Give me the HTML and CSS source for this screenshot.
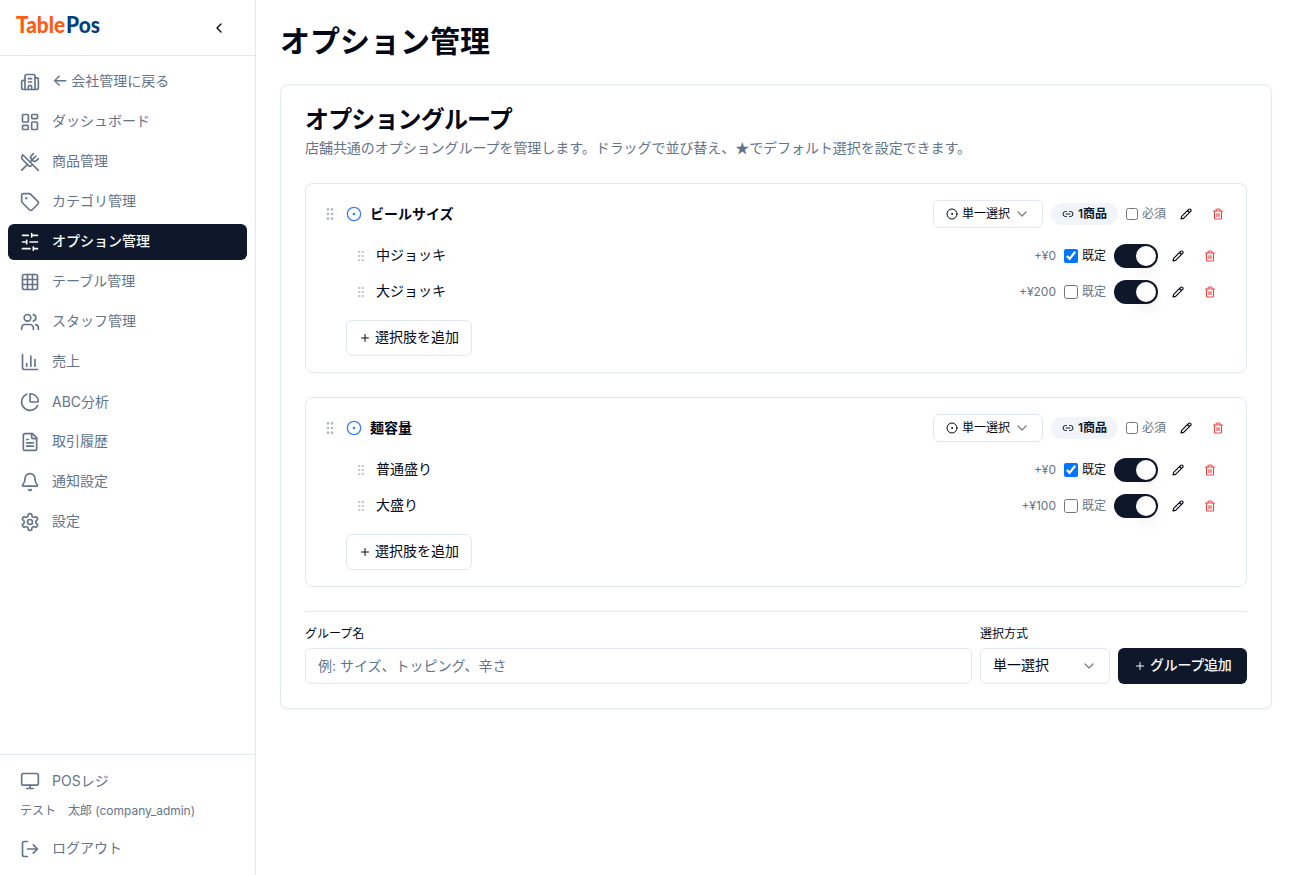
FILE: index.html
```html
<!DOCTYPE html>
<html lang="ja">
<head>
    <meta charset="UTF-8">
    <meta name="viewport" content="width=device-width, initial-scale=1.0">
    <title>オプション管理 - TablePos</title>
    <link rel="stylesheet" href="styles.css">
</head>
<body>
    <!-- アイコン定義 -->
    <svg class="sprite" xmlns="http://www.w3.org/2000/svg">
        <symbol id="i-left" viewBox="0 0 24 24"><path d="m15 18-6-6 6-6"/></symbol>
        <symbol id="i-down" viewBox="0 0 24 24"><path d="m6 9 6 6 6-6"/></symbol>
        <symbol id="i-building" viewBox="0 0 24 24"><path d="M10 12h4M10 8h4M14 21v-3a2 2 0 0 0-4 0v3"/><path d="M6 10H4a2 2 0 0 0-2 2v7a2 2 0 0 0 2 2h16a2 2 0 0 0 2-2V9a2 2 0 0 0-2-2h-2"/><path d="M6 21V5a2 2 0 0 1 2-2h8a2 2 0 0 1 2 2v16"/></symbol>
        <symbol id="i-dashboard" viewBox="0 0 24 24"><rect width="7" height="9" x="3" y="3" rx="1"/><rect width="7" height="5" x="14" y="3" rx="1"/><rect width="7" height="9" x="14" y="12" rx="1"/><rect width="7" height="5" x="3" y="16" rx="1"/></symbol>
        <symbol id="i-utensils" viewBox="0 0 24 24"><path d="m16 2-2.3 2.3a3 3 0 0 0 0 4.2l1.8 1.8a3 3 0 0 0 4.2 0L22 8"/><path d="M15 15 3.3 3.3a4.2 4.2 0 0 0 0 6l7.3 7.3c.7.7 2 .7 2.8 0L15 15Zm0 0 7 7"/><path d="m2.1 21.8 6.4-6.3"/><path d="m19 5-7 7"/></symbol>
        <symbol id="i-tag" viewBox="0 0 24 24"><path d="M12.586 2.586A2 2 0 0 0 11.172 2H4a2 2 0 0 0-2 2v7.172a2 2 0 0 0 .586 1.414l8.704 8.704a2.426 2.426 0 0 0 3.42 0l6.58-6.58a2.426 2.426 0 0 0 0-3.42z"/><circle cx="7.5" cy="7.5" r=".5" fill="currentColor"/></symbol>
        <symbol id="i-sliders" viewBox="0 0 24 24"><path d="M21 4h-7M10 4H3M21 12h-9M8 12H3M21 20h-5M12 20H3M14 2v4M8 10v4M16 18v4"/></symbol>
        <symbol id="i-grid" viewBox="0 0 24 24"><rect width="18" height="18" x="3" y="3" rx="2"/><path d="M3 9h18M3 15h18M9 3v18M15 3v18"/></symbol>
        <symbol id="i-users" viewBox="0 0 24 24"><path d="M16 21v-2a4 4 0 0 0-4-4H6a4 4 0 0 0-4 4v2"/><circle cx="9" cy="7" r="4"/><path d="M22 21v-2a4 4 0 0 0-3-3.87M16 3.13a4 4 0 0 1 0 7.75"/></symbol>
        <symbol id="i-chart" viewBox="0 0 24 24"><path d="M3 3v16a2 2 0 0 0 2 2h16M18 17V9M13 17V5M8 17v-3"/></symbol>
        <symbol id="i-pie" viewBox="0 0 24 24"><path d="M21 12c.552 0 1.005-.449.95-.998a10 10 0 0 0-8.953-8.951c-.55-.055-.998.398-.998.95v8a1 1 0 0 0 1 1z"/><path d="M21.21 15.89A10 10 0 1 1 8 2.83"/></symbol>
        <symbol id="i-file" viewBox="0 0 24 24"><path d="M15 2H6a2 2 0 0 0-2 2v16a2 2 0 0 0 2 2h12a2 2 0 0 0 2-2V7Z"/><path d="M14 2v4a2 2 0 0 0 2 2h4M10 9H8M16 13H8M16 17H8"/></symbol>
        <symbol id="i-bell" viewBox="0 0 24 24"><path d="M10.268 21a2 2 0 0 0 3.464 0"/><path d="M3.262 15.326A1 1 0 0 0 4 17h16a1 1 0 0 0 .74-1.673C19.41 13.956 18 12.499 18 8A6 6 0 0 0 6 8c0 4.499-1.411 5.956-2.738 7.326"/></symbol>
        <symbol id="i-gear" viewBox="0 0 24 24"><path d="M12.22 2h-.44a2 2 0 0 0-2 2v.18a2 2 0 0 1-1 1.73l-.43.25a2 2 0 0 1-2 0l-.15-.08a2 2 0 0 0-2.73.73l-.22.38a2 2 0 0 0 .73 2.73l.15.1a2 2 0 0 1 1 1.72v.51a2 2 0 0 1-1 1.74l-.15.09a2 2 0 0 0-.73 2.73l.22.38a2 2 0 0 0 2.73.73l.15-.08a2 2 0 0 1 2 0l.43.25a2 2 0 0 1 1 1.73V20a2 2 0 0 0 2 2h.44a2 2 0 0 0 2-2v-.18a2 2 0 0 1 1-1.73l.43-.25a2 2 0 0 1 2 0l.15.08a2 2 0 0 0 2.73-.73l.22-.39a2 2 0 0 0-.73-2.73l-.15-.08a2 2 0 0 1-1-1.74v-.5a2 2 0 0 1 1-1.74l.15-.09a2 2 0 0 0 .73-2.73l-.22-.38a2 2 0 0 0-2.73-.73l-.15.08a2 2 0 0 1-2 0l-.43-.25a2 2 0 0 1-1-1.73V4a2 2 0 0 0-2-2z"/><circle cx="12" cy="12" r="3"/></symbol>
        <symbol id="i-monitor" viewBox="0 0 24 24"><rect width="20" height="14" x="2" y="3" rx="2"/><path d="M8 21h8M12 17v4"/></symbol>
        <symbol id="i-logout" viewBox="0 0 24 24"><path d="M9 21H5a2 2 0 0 1-2-2V5a2 2 0 0 1 2-2h4M16 17l5-5-5-5M21 12H9"/></symbol>
        <symbol id="i-grip" viewBox="0 0 24 24"><circle cx="9" cy="12" r="1"/><circle cx="9" cy="5" r="1"/><circle cx="9" cy="19" r="1"/><circle cx="15" cy="12" r="1"/><circle cx="15" cy="5" r="1"/><circle cx="15" cy="19" r="1"/></symbol>
        <symbol id="i-dot" viewBox="0 0 24 24"><circle cx="12" cy="12" r="10"/><circle cx="12" cy="12" r="1"/></symbol>
        <symbol id="i-link" viewBox="0 0 24 24"><path d="M9 17H7A5 5 0 0 1 7 7h2M15 7h2a5 5 0 1 1 0 10h-2M8 12h8"/></symbol>
        <symbol id="i-pencil" viewBox="0 0 24 24"><path d="M21.174 6.812a1 1 0 0 0-3.986-3.987L3.842 16.174a2 2 0 0 0-.5.83l-1.321 4.352a.5.5 0 0 0 .623.622l4.353-1.32a2 2 0 0 0 .83-.497zM15 5l4 4"/></symbol>
        <symbol id="i-trash" viewBox="0 0 24 24"><path d="M3 6h18M19 6v14c0 1-1 2-2 2H7c-1 0-2-1-2-2V6M8 6V4c0-1 1-2 2-2h4c1 0 2 1 2 2v2M10 11v6M14 11v6"/></symbol>
        <symbol id="i-plus" viewBox="0 0 24 24"><path d="M5 12h14M12 5v14"/></symbol>
    </svg>

    <div class="layout">
        <aside class="sidebar">
            <div class="side-head">
                <svg class="logo" width="90" height="40" role="img" aria-label="TablePos">
                    <text class="logo-table" x="0" y="27" textLength="49" lengthAdjust="spacingAndGlyphs">Table</text>
                    <text class="logo-pos" x="50" y="27" textLength="34" lengthAdjust="spacingAndGlyphs">Pos</text>
                </svg>
                <button class="collapse"><svg class="icon"><use href="#i-left"/></svg></button>
            </div>
            <nav class="nav">
                <a href="#"><svg class="icon"><use href="#i-building"/></svg><span><span class="arrow">←</span> 会社管理に戻る</span></a>
                <a href="#"><svg class="icon"><use href="#i-dashboard"/></svg><span>ダッシュボード</span></a>
                <a href="#"><svg class="icon"><use href="#i-utensils"/></svg><span>商品管理</span></a>
                <a href="#"><svg class="icon"><use href="#i-tag"/></svg><span>カテゴリ管理</span></a>
                <a href="#" class="active"><svg class="icon"><use href="#i-sliders"/></svg><span>オプション管理</span></a>
                <a href="#"><svg class="icon"><use href="#i-grid"/></svg><span>テーブル管理</span></a>
                <a href="#"><svg class="icon"><use href="#i-users"/></svg><span>スタッフ管理</span></a>
                <a href="#"><svg class="icon"><use href="#i-chart"/></svg><span>売上</span></a>
                <a href="#"><svg class="icon"><use href="#i-pie"/></svg>ABC分析</a>
                <a href="#"><svg class="icon"><use href="#i-file"/></svg><span>取引履歴</span></a>
                <a href="#"><svg class="icon"><use href="#i-bell"/></svg><span>通知設定</span></a>
                <a href="#"><svg class="icon"><use href="#i-gear"/></svg><span>設定</span></a>
            </nav>
            <div class="side-foot">
                <a href="#"><svg class="icon"><use href="#i-monitor"/></svg>POSレジ</a>
                <p class="user">テスト　太郎 (company_admin)</p>
                <a href="#"><svg class="icon"><use href="#i-logout"/></svg><span>ログアウト</span></a>
            </div>
        </aside>

        <main class="main">
            <h1>オプション管理</h1>
            <section class="card">
                <h2>オプショングループ</h2>
                <p class="desc">店舗共通のオプショングループを管理します。ドラッグで並び替え、<span class="star">★</span>でデフォルト選択を設定できます。</p>

                <div class="group">
                    <div class="group-head">
                        <svg class="icon grip"><use href="#i-grip"/></svg>
                        <svg class="icon radio"><use href="#i-dot"/></svg>
                        <h3>ビールサイズ</h3>
                        <button class="select small"><svg class="icon"><use href="#i-dot"/></svg>単一選択<svg class="icon chevron"><use href="#i-down"/></svg></button>
                        <span class="badge"><svg class="icon"><use href="#i-link"/></svg>1商品</span>
                        <label class="check required"><input type="checkbox">必須</label>
                        <button class="tool"><svg class="icon"><use href="#i-pencil"/></svg></button>
                        <button class="tool danger"><svg class="icon"><use href="#i-trash"/></svg></button>
                    </div>
                    <ul class="choices">
                        <li>
                            <svg class="icon grip"><use href="#i-grip"/></svg>
                            <span class="name">中ジョッキ</span>
                            <span class="price">+¥0</span>
                            <label class="check on"><input type="checkbox" checked>既定</label>
                            <button class="switch"><i></i></button>
                            <button class="tool"><svg class="icon"><use href="#i-pencil"/></svg></button>
                            <button class="tool danger"><svg class="icon"><use href="#i-trash"/></svg></button>
                        </li>
                        <li>
                            <svg class="icon grip"><use href="#i-grip"/></svg>
                            <span class="name">大ジョッキ</span>
                            <span class="price">+¥200</span>
                            <label class="check"><input type="checkbox">既定</label>
                            <button class="switch"><i></i></button>
                            <button class="tool"><svg class="icon"><use href="#i-pencil"/></svg></button>
                            <button class="tool danger"><svg class="icon"><use href="#i-trash"/></svg></button>
                        </li>
                    </ul>
                    <button class="add-choice"><svg class="icon"><use href="#i-plus"/></svg><span>選択肢を追加</span></button>
                </div>

                <div class="group">
                    <div class="group-head">
                        <svg class="icon grip"><use href="#i-grip"/></svg>
                        <svg class="icon radio"><use href="#i-dot"/></svg>
                        <h3>麺容量</h3>
                        <button class="select small"><svg class="icon"><use href="#i-dot"/></svg>単一選択<svg class="icon chevron"><use href="#i-down"/></svg></button>
                        <span class="badge"><svg class="icon"><use href="#i-link"/></svg>1商品</span>
                        <label class="check required"><input type="checkbox">必須</label>
                        <button class="tool"><svg class="icon"><use href="#i-pencil"/></svg></button>
                        <button class="tool danger"><svg class="icon"><use href="#i-trash"/></svg></button>
                    </div>
                    <ul class="choices">
                        <li>
                            <svg class="icon grip"><use href="#i-grip"/></svg>
                            <span class="name">普通盛り</span>
                            <span class="price">+¥0</span>
                            <label class="check on"><input type="checkbox" checked>既定</label>
                            <button class="switch"><i></i></button>
                            <button class="tool"><svg class="icon"><use href="#i-pencil"/></svg></button>
                            <button class="tool danger"><svg class="icon"><use href="#i-trash"/></svg></button>
                        </li>
                        <li>
                            <svg class="icon grip"><use href="#i-grip"/></svg>
                            <span class="name">大盛り</span>
                            <span class="price">+¥100</span>
                            <label class="check"><input type="checkbox">既定</label>
                            <button class="switch"><i></i></button>
                            <button class="tool"><svg class="icon"><use href="#i-pencil"/></svg></button>
                            <button class="tool danger"><svg class="icon"><use href="#i-trash"/></svg></button>
                        </li>
                    </ul>
                    <button class="add-choice"><svg class="icon"><use href="#i-plus"/></svg><span>選択肢を追加</span></button>
                </div>

                <form class="new-group">
                    <div class="field grow">
                        <label for="group-name">グループ名</label>
                        <input id="group-name" type="text" placeholder="例: サイズ、トッピング、辛さ">
                    </div>
                    <div class="field">
                        <label>選択方式</label>
                        <button type="button" class="select"><span>単一選択</span><svg class="icon chevron"><use href="#i-down"/></svg></button>
                    </div>
                    <button type="button" class="add-group"><svg class="icon"><use href="#i-plus"/></svg><span>グループ追加</span></button>
                </form>
            </section>
        </main>
    </div>
</body>
</html>
```
FILE: styles.css
```css
*{
    box-sizing: border-box;
    margin: 0;
    padding: 0;
}
body{
    font-family: Inter, "Noto Sans CJK JP", sans-serif;
    font-size: 14px;
    line-height: 20px;
    color: #020817;
    background: #fff;
}
a{
    color: inherit;
    text-decoration: none;
}
ul{
    list-style: none;
}
button, input{
    font: inherit;
    color: inherit;
}
button{
    display: flex;
    align-items: center;
    border: none;
    background: none;
    white-space: nowrap;
    cursor: pointer;
}
.sprite{
    display: none;
}
.icon{
    width: 16px;
    height: 16px;
    flex-shrink: 0;
    fill: none;
    stroke: currentColor;
    stroke-width: 2;
    stroke-linecap: round;
    stroke-linejoin: round;
}
.layout{
    display: flex;
    height: 875px;
}

/* サイドバー */
.sidebar{
    display: flex;
    flex-direction: column;
    width: 256px;
    flex-shrink: 0;
    border-right: 1px solid #e2e8f0;
    color: #64748b;
}
.side-head{
    display: flex;
    justify-content: space-between;
    align-items: center;
    height: 56px;
    padding: 0 16px;
    border-bottom: 1px solid #e2e8f0;
}
.logo{
    margin-bottom: 4px;
    font-family: Lato, sans-serif;
    font-size: 23px;
    font-weight: 900;
}
.logo-table{
    fill: #ff5a12;
}
.logo-pos{
    fill: #04407c;
}
.collapse{
    justify-content: center;
    width: 40px;
    height: 40px;
    color: #020817;
}
.nav{
    display: flex;
    flex-direction: column;
    flex: 1;
    gap: 4px;
    padding: 8px;
}
.nav a, .side-foot a{
    display: flex;
    align-items: center;
    gap: 12px;
    height: 36px;
    padding: 0 12px;
    border-radius: 6px;
}
.nav a > span, .side-foot a > span, .add-choice span, .add-group span, .select span{
    padding-bottom: 2px;
}
.nav .icon, .side-foot .icon{
    width: 20px;
    height: 20px;
}
.nav .active{
    background: #0f172a;
    color: #f8fafc;
    font-weight: 500;
}
.arrow{
    margin-right: -1px;
    font-size: 17px;
    line-height: 1;
}
.side-foot{
    padding: 8px;
    border-top: 1px solid #e2e8f0;
}
.user{
    padding: 4px 12px;
    margin-bottom: 8px;
    font-size: 12px;
    line-height: 16px;
    letter-spacing: -.03px;
}

/* メイン */
.main{
    flex: 1;
    padding: 23px 24px 24px;
}
h1{
    margin-bottom: 25px;
    font-size: 30px;
    line-height: 36px;
    font-weight: 700;
}
.card{
    padding: 23px 24px 24px;
    border: 1px solid #e2e8f0;
    border-radius: 8px;
    box-shadow: 0 1px 2px rgba(0, 0, 0, .05);
}
h2{
    margin-bottom: 6px;
    font-size: 24px;
    line-height: 24px;
    font-weight: 600;
    letter-spacing: -.85px;
}
.desc{
    height: 20px;
    margin-bottom: 25px;
    color: #64748b;
    letter-spacing: -.05px;
}
.star{
    font-family: "Noto Sans CJK JP", sans-serif;
    line-height: 1;
}
.group{
    padding: 16px;
    margin-bottom: 24px;
    border: 1px solid #e2e8f0;
    border-radius: 8px;
}
.group-head{
    display: flex;
    align-items: center;
    gap: 8px;
    height: 28px;
    margin-bottom: 12px;
}
.grip{
    color: #64748b;
    opacity: .5;
}
.radio{
    color: #3b82f6;
}
h3{
    flex: 1;
    padding-bottom: 1px;
    font-size: 14px;
    font-weight: 600;
}
.select{
    justify-content: space-between;
    width: 130px;
    height: 36px;
    padding: 0 12px;
    border: 1px solid #e2e8f0;
    border-radius: 6px;
}
.select.small{
    justify-content: flex-start;
    gap: 4px;
    width: 110px;
    height: 28px;
    font-size: 12px;
}
.select.small .icon{
    width: 12px;
    height: 12px;
}
.select .chevron, .select.small .chevron{
    width: 16px;
    height: 16px;
    opacity: .5;
}
.badge{
    display: flex;
    align-items: center;
    gap: 4px;
    height: 22px;
    padding: 0 11px;
    border-radius: 11px;
    background: #f1f5f9;
    color: #0f172a;
    font-size: 12px;
    font-weight: 600;
}
.badge .icon{
    width: 12px;
    height: 12px;
}
.check{
    display: flex;
    align-items: center;
    gap: 4px;
    font-size: 12px;
    line-height: 16px;
    color: #64748b;
}
.check input{
    width: 14px;
    height: 14px;
}
.check.required input{
    width: 12px;
    height: 12px;
}
.check.on{
    color: #020817;
}
.tool{
    justify-content: center;
    width: 24px;
    height: 24px;
}
.tool .icon{
    width: 12px;
    height: 12px;
    stroke-width: 2.3;
}
.danger{
    color: #ef4444;
}
.choices{
    display: flex;
    flex-direction: column;
    gap: 4px;
    margin: 0 0 12px 24px;
}
.choices li{
    display: flex;
    align-items: center;
    gap: 8px;
    height: 32px;
    padding: 0 8px;
}
.choices .grip{
    width: 14px;
    height: 14px;
    opacity: .4;
}
.name{
    flex: 1;
    padding-bottom: 2px;
}
.price{
    font-size: 12px;
    color: #64748b;
}
.switch{
    justify-content: flex-end;
    width: 44px;
    height: 24px;
    padding: 2px;
    border-radius: 12px;
    background: #0f172a;
}
.switch i{
    width: 20px;
    height: 20px;
    border-radius: 50%;
    background: #fff;
    box-shadow: 0 10px 15px -3px rgba(0, 0, 0, .1), 0 4px 6px -4px rgba(0, 0, 0, .1);
}
.add-choice{
    gap: 4px;
    height: 36px;
    margin-left: 24px;
    padding: 0 12px;
    border: 1px solid #e2e8f0;
    border-radius: 6px;
}
.add-choice .icon, .add-group .icon{
    width: 12px;
    height: 12px;
}
.new-group{
    display: flex;
    align-items: flex-end;
    gap: 8px;
    padding-top: 13px;
    border-top: 1px solid #e2e8f0;
}
.field label{
    display: block;
    margin-bottom: 5px;
    font-size: 12px;
    line-height: 18px;
}
.field input{
    display: block;
    width: 100%;
    height: 36px;
    padding: 0 12px 1px;
    border: 1px solid #e2e8f0;
    border-radius: 6px;
}
.field input::placeholder{
    color: #64748b;
}
.grow{
    flex: 1;
}
.add-group{
    gap: 4px;
    width: 129px;
    height: 36px;
    padding: 0 0 0 16px;
    border-radius: 6px;
    background: #0f172a;
    color: #f8fafc;
    font-weight: 500;
    letter-spacing: -.3px;
}
```
